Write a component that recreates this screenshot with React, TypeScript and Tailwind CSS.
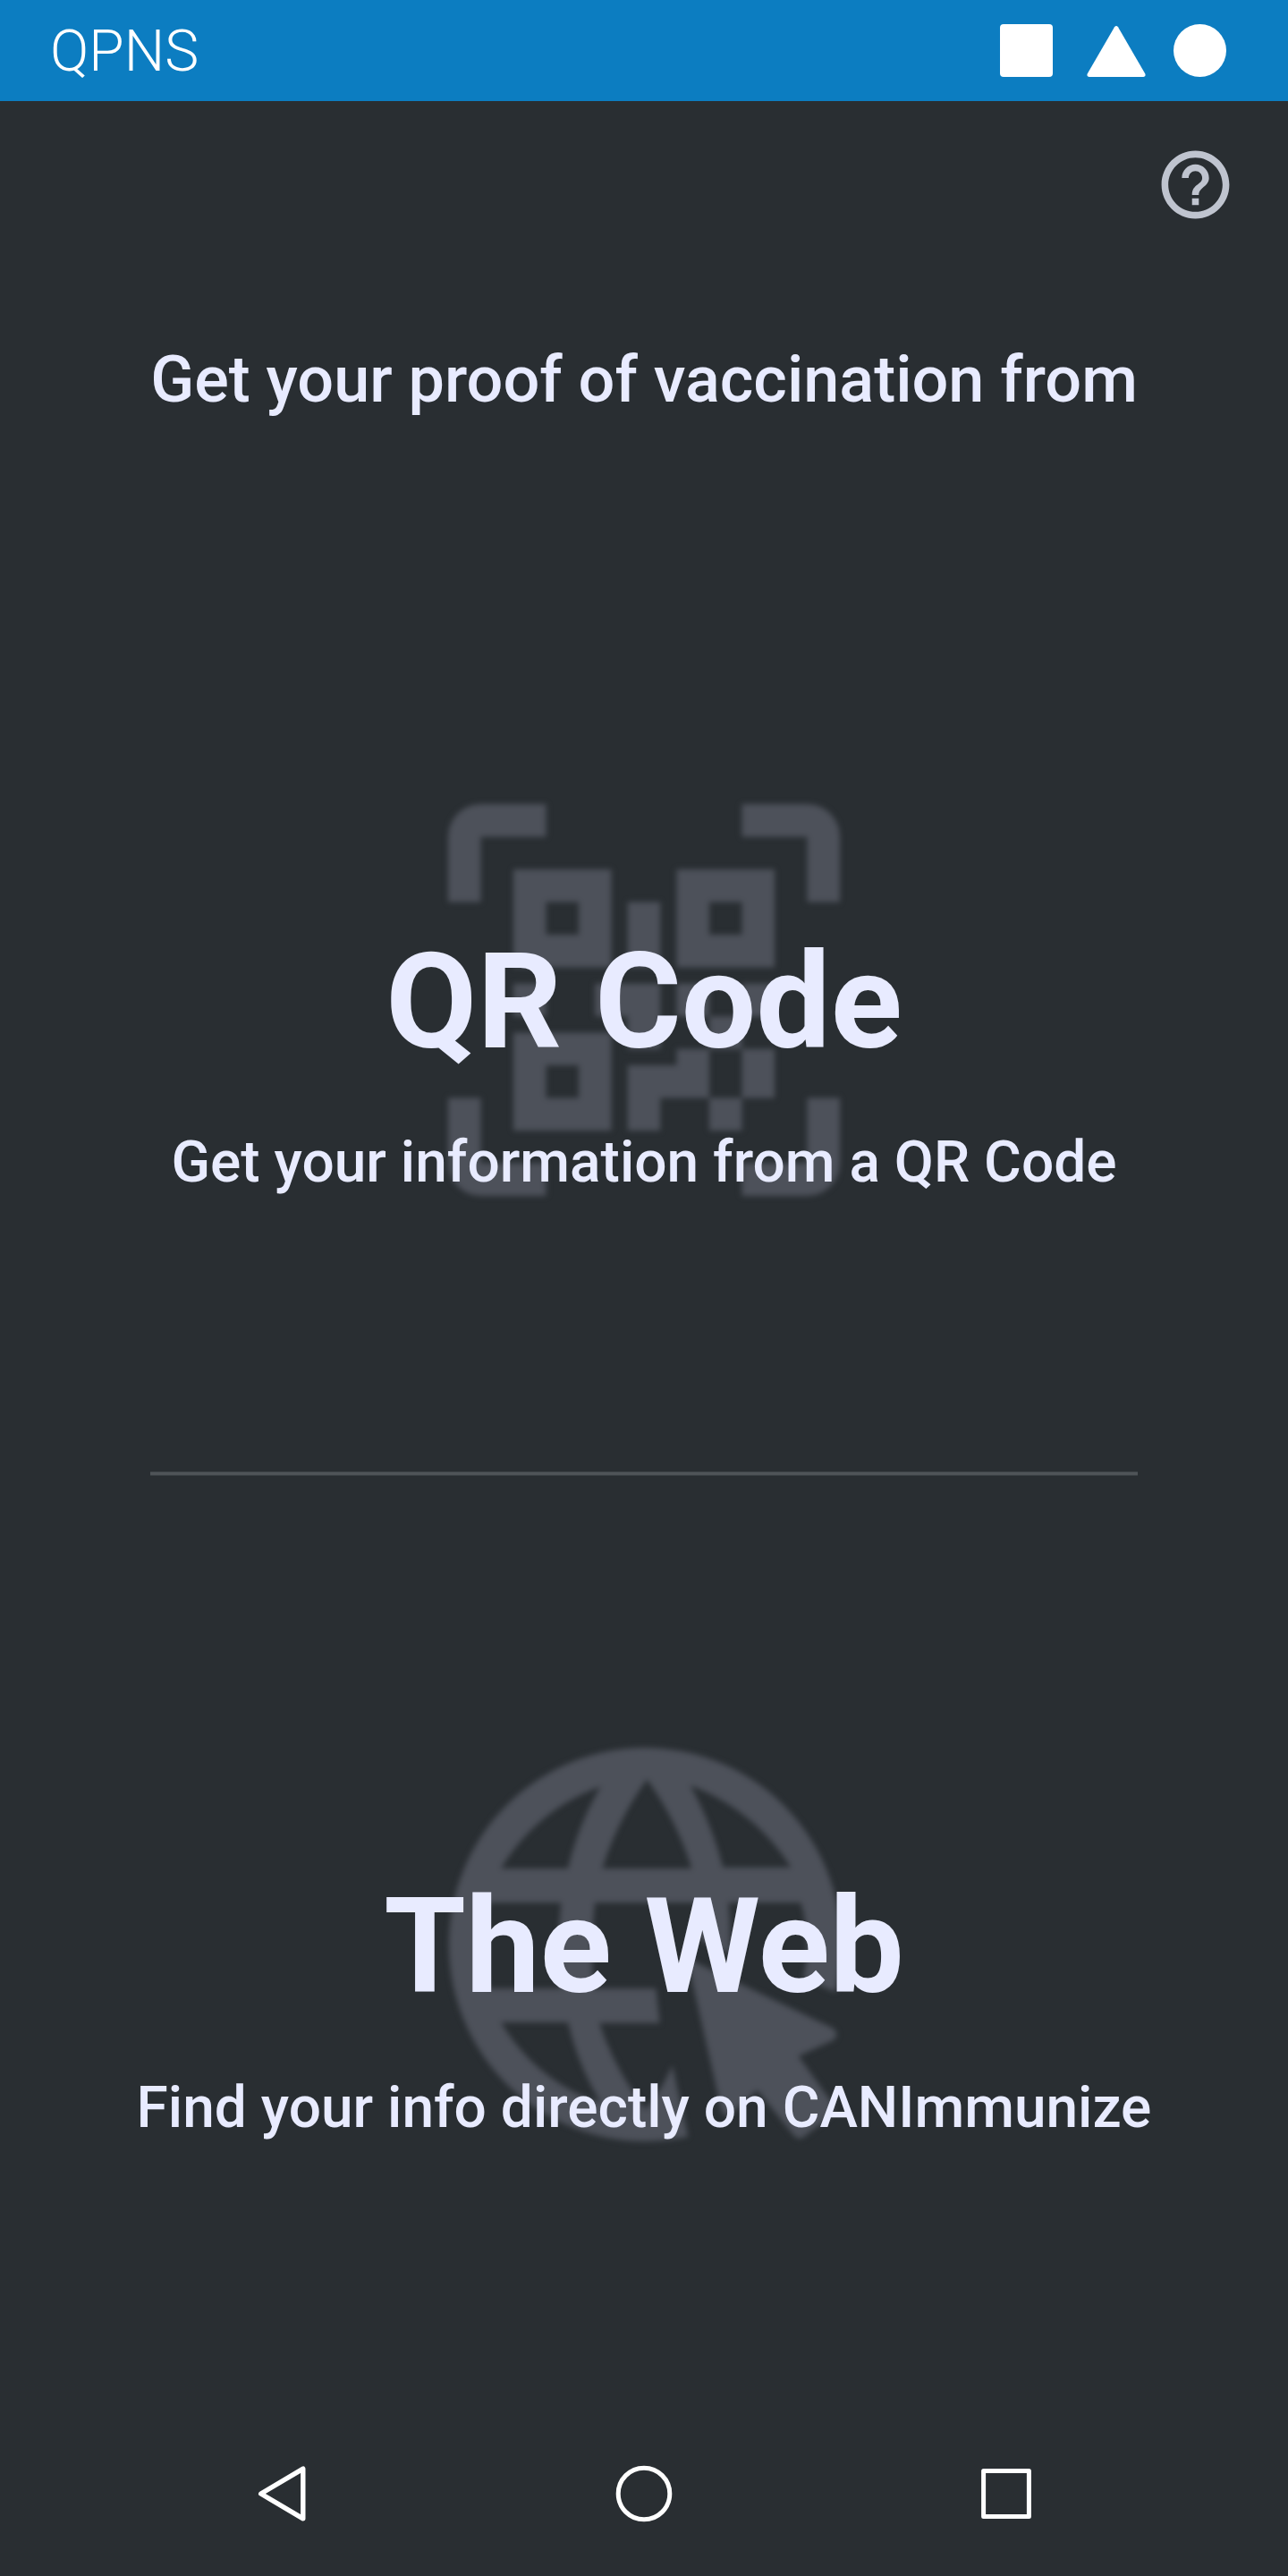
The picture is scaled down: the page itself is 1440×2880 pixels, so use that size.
import type { ReactNode } from "react";

function QrScanIcon() {
  return (
    <svg viewBox="0 0 24 24" className="h-[438px] w-[438px] overflow-visible blur-[3px]" fill="#4d515a">
      <path d="M4,4H10V10H4V4M20,4V10H14V4H20M14,15H16V13H14V11H16V13H18V11H20V13H18V15H20V18H18V20H16V18H13V20H11V16H14V15M16,15V18H18V15H16M4,20V14H10V20H4M6,6V8H8V6H6M16,6V8H18V6H16M6,16V18H8V16H6M4,11H6V13H4V11M9,11H13V15H11V13H9V11M11,6H13V10H11V6M2,2V6H0V2A2,2 0 0,1 2,0H6V2H2M22,0A2,2 0 0,1 24,2V6H22V2H18V0H22M2,18V22H6V24H2A2,2 0 0,1 0,22V18H2M22,22V18H24V22A2,2 0 0,1 22,24H18V22H22Z" />
    </svg>
  );
}

function GlobeCursorIcon() {
  return (
    <svg viewBox="0 0 1380 1404" className="h-[468px] w-[460px] overflow-visible blur-[3px]" fill="#4d515a">
      <path
        fillRule="evenodd"
        d="M1332 862A658 660 0 1 0 838 1346L785 1108Q752 1186 695 1256Q592 1122 540 965H743L730 850H521Q508 705 525 562H867Q876 620 877 685L978 735Q982 650 973 562H1216Q1255 690 1224 815ZM210 447H435Q468 302 545 172Q330 250 210 447ZM550 447H850Q802 290 700 148Q598 290 550 447ZM845 168Q918 300 955 443H1183Q1060 250 845 168ZM170 562H412Q396 705 412 850H170Q130 705 170 562ZM210 963H435Q468 1105 545 1234Q330 1162 210 963Z"
      />
      <path d="M834 748L1326 984Q1346 1004 1326 1022L1208 1076L1320 1232Q1332 1262 1308 1284L1222 1350Q1206 1358 1192 1342L1070 1190L980 1272Q958 1284 950 1258Z" />
    </svg>
  );
}

function Choice({ icon, title, detail }: { icon: ReactNode; title: string; detail: ReactNode }) {
  return (
    <section className="relative flex h-[266px] w-full flex-col items-center">
      <div className="absolute inset-x-0 top-[-136px] flex h-[438px] items-center justify-center">{icon}</div>
      <h2 className="relative h-[172px] text-[148px] leading-[172px] font-bold whitespace-nowrap">{title}</h2>
      {detail}
    </section>
  );
}

export default function App() {
  return (
    <div className="flex h-[2880px] w-[1440px] flex-col overflow-hidden bg-[#292e32] font-['Roboto',sans-serif] text-[#e8ebff]">
      <header className="flex h-[113px] shrink-0 items-center bg-[#0c7dc1] pr-[69px] pl-[56px] text-white">
        <span className="flex-1 pt-[2px] text-[64px] leading-[76px] font-light">QPNS</span>
        <div className="h-[59px] w-[59px] rounded-[4px] bg-white" />
        <svg viewBox="0 0 66 59" className="ml-[38px] h-[59px] w-[66px]" fill="white">
          <path d="M31 3.2Q33 .7 35 3.2L65.3 55.5Q66.4 58.5 63.5 59H2.5Q-.4 58.5 .7 55.5Z" />
        </svg>
        <div className="ml-[31px] h-[59px] w-[59px] rounded-full bg-white" />
      </header>

      <main className="flex flex-1 flex-col items-center">
        <div className="flex h-[186px] w-full justify-end pt-[47.5px] pr-[58.5px]">
          <svg viewBox="0 0 24 24" className="h-[91px] w-[91px]" fill="#bfc4cf">
            <path d="M11 18h2v-2h-2v2zm1-16C6.48 2 2 6.48 2 12s4.48 10 10 10 10-4.48 10-10S17.52 2 12 2zm0 18c-4.41 0-8-3.59-8-8s3.59-8 8-8 8 3.59 8 8-3.59 8-8 8zm0-14c-2.21 0-4 1.79-4 4h2c0-1.1.9-2 2-2s2 .9 2 2c0 2-3 1.75-3 5h2c0-2.25 3-2.5 3-5 0-2.21-1.79-4-4-4z" />
          </svg>
        </div>
        <h1 className="mt-[84px] h-[84px] text-[72px] leading-[84px] font-medium whitespace-nowrap">
          Get your proof of vaccination from
        </h1>
        <div className="mt-[568px] w-full">
          <Choice
            icon={<QrScanIcon />}
            title="QR Code"
            detail={
              <p className="relative mt-[55px] h-[76px] text-[64px] leading-[76px] font-medium whitespace-nowrap">
                Get your information from a QR Code
              </p>
            }
          />
        </div>
        <div className="mt-[344px] h-[5px] w-[1104px] border-y border-[#3b4145] bg-[#4f5458]" />
        <div className="mt-[441px] w-full">
          <Choice
            icon={<GlobeCursorIcon />}
            title="The Web"
            detail={
              <p className="relative mt-[56px] h-[76px] text-[64px] leading-[76px] font-medium whitespace-nowrap">
                Find your info directly on CANImmunize
              </p>
            }
          />
        </div>
      </main>

      <nav className="flex h-[185px] shrink-0 items-center justify-between pr-[287px] pl-[287px]">
        <svg viewBox="0 0 56 64" className="h-[64px] w-[56px]" fill="none" stroke="white" strokeWidth="5.4" strokeLinejoin="round">
          <path d="M4.7 32L51.8 4.2V59.8Z" />
        </svg>
        <svg viewBox="0 0 64 64" className="mr-[1px] h-[64px] w-[64px]" fill="none" stroke="white" strokeWidth="5">
          <circle cx="32" cy="32" r="28.8" />
        </svg>
        <svg viewBox="0 0 56 56" className="h-[56px] w-[56px]" fill="none" stroke="white" strokeWidth="5" strokeLinejoin="round">
          <rect x="2.6" y="2.6" width="50.8" height="50.8" />
        </svg>
      </nav>
    </div>
  );
}
